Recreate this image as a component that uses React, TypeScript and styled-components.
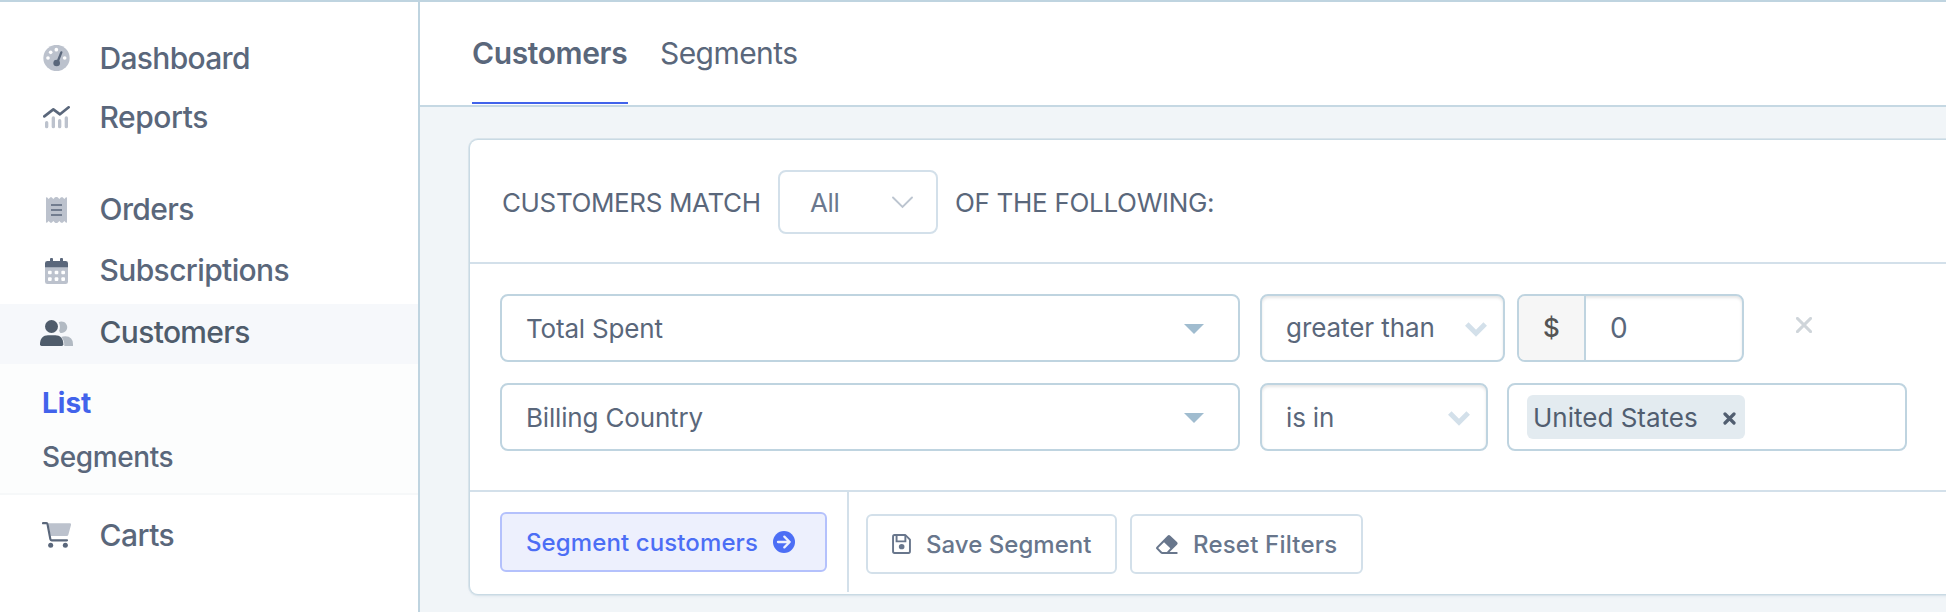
import React from 'react';
import styled, { createGlobalStyle } from 'styled-components';

const ink = '#5a677b';
const muted = '#bcc2cd';
const line = '#d3e0ea';
const fieldLine = '#bfd4e0';

const GlobalStyle = createGlobalStyle`
  * { box-sizing: border-box; }
  body {
    margin: 0;
    overflow: hidden;
    background: #f1f5f8;
    color: ${ink};
    font-family: "Inter", "Liberation Sans", sans-serif;
  }
`;

const Page = styled.div`
  display: flex;
  width: 100%;
  height: 612px;
  overflow: hidden;
  border-top: 2px solid ${fieldLine};
`;

const Label = styled.span<{ $size: number; $track?: number; $weight?: number; $drop?: number }>`
  flex: none;
  margin-top: ${(p) => (p.$drop ?? 0) * 2}px;
  font-size: ${(p) => p.$size}px;
  font-weight: ${(p) => p.$weight ?? 400};
  letter-spacing: ${(p) => p.$track ?? 0}px;
  line-height: 1.2;
  white-space: nowrap;
`;

/* Sidebar */

const Sidebar = styled.nav`
  flex: none;
  display: flex;
  flex-direction: column;
  width: 420px;
  padding-top: 26px;
  background: #fff;
  border-right: 2px solid ${fieldLine};
`;

const NavItem = styled.a<{ $height?: number; $gap?: number; $active?: boolean }>`
  flex: none;
  display: flex;
  align-items: center;
  height: ${(p) => p.$height ?? 60}px;
  margin-top: ${(p) => p.$gap ?? 0}px;
  padding: 0 0 ${(p) => (p.$active ? 3 : 0)}px 39px;
  background: ${(p) => (p.$active ? '#f6f8fb' : 'transparent')};
  color: ${(p) => (p.$active ? '#4f5c6b' : ink)};
`;

const IconSlot = styled.span`
  flex: none;
  display: flex;
  justify-content: center;
  width: 35px;
  margin-right: 25.5px;
`;

const SubMenu = styled.div`
  flex: none;
  display: flex;
  flex-direction: column;
  height: 131px;
  padding: 13px 0 0 42px;
  background: #fcfdfd;
  border-bottom: 2px solid #f6f8f9;
`;

const SubItem = styled.a<{ $active?: boolean }>`
  display: flex;
  align-items: center;
  height: 54px;
  color: ${(p) => (p.$active ? '#4263eb' : ink)};
`;

/* Main column */

const Main = styled.main`
  flex: 1;
  min-width: 0;
  display: flex;
  flex-direction: column;
`;

const TabBar = styled.header`
  flex: none;
  display: flex;
  gap: 32px;
  height: 105px;
  padding: 0 0 1px 52px;
  background: #fff;
  border-bottom: 2px solid #c5d8e3;
`;

const Tab = styled.a<{ $width: number; $active?: boolean }>`
  display: flex;
  align-items: center;
  width: ${(p) => p.$width}px;
  padding-top: 2px;
  border-bottom: 2px solid ${(p) => (p.$active ? '#4263eb' : 'transparent')};
`;

const Card = styled.section`
  flex: none;
  width: 1520px;
  height: 454px;
  margin: 33px 0 0 50px;
  border-radius: 8px;
  background: #fff;
  box-shadow: 0 0 0 1px #c9dae4, 0 0 0 2px #d9e4eb, 0 2px 3px rgba(150, 180, 200, 0.25);
`;

const MatchRow = styled.div`
  display: flex;
  align-items: center;
  height: 124px;
  padding: 2px 0 0 32px;
  border-bottom: 2px solid ${line};
`;

const MatchLabel = styled.div<{ $width?: number }>`
  flex: none;
  display: flex;
  width: ${(p) => (p.$width ? `${p.$width}px` : 'auto')};
  padding-top: 2px;
`;

const MatchSelect = styled.div`
  flex: none;
  display: flex;
  align-items: center;
  justify-content: space-between;
  width: 160px;
  height: 64px;
  margin-right: 17px;
  padding: 0 23px 0 30px;
  border: 2px solid ${line};
  border-radius: 8px;
  color: #6b788e;
`;

const Filters = styled.div`
  display: flex;
  flex-direction: column;
  gap: 21px;
  height: 228px;
  padding: 30px 0 0 30px;
  border-bottom: 2px solid ${line};
`;

const FilterRow = styled.div`
  display: flex;
  align-items: center;
  height: 68px;
`;

const Field = styled.div<{ $width: number; $gap?: number; $inset?: boolean; $right?: number }>`
  flex: none;
  display: flex;
  align-items: center;
  justify-content: space-between;
  width: ${(p) => p.$width}px;
  height: 68px;
  margin-right: ${(p) => p.$gap ?? 0}px;
  padding: 2px ${(p) => p.$right ?? 16}px 0 24px;
  border: 2px solid ${fieldLine};
  border-radius: 8px;
  box-shadow: ${(p) => (p.$inset ? 'inset 0 2px 3px rgba(0, 0, 0, 0.1)' : 'none')};
`;

const MoneyField = styled(Field)`
  justify-content: flex-start;
  padding: 0;
  overflow: hidden;
`;

const Currency = styled.div`
  display: flex;
  align-items: center;
  justify-content: center;
  width: 67px;
  height: 100%;
  background: #f6f6f6;
  border-right: 2px solid ${fieldLine};
  color: #545454;
`;

const Amount = styled.div`
  display: flex;
  padding: 2px 0 0 24px;
`;

const TagField = styled(Field)`
  padding: 0 18px;
`;

const Tag = styled.div`
  display: flex;
  align-items: center;
  justify-content: space-between;
  width: 218px;
  height: 44px;
  padding: 2px 9px 0 6px;
  border-radius: 6px;
  background: #e3ebf0;
  color: #515e70;
`;

const RemoveButton = styled.span`
  display: flex;
  margin: 0 0 6px 52px;
`;

const Footer = styled.div`
  display: flex;
  height: 102px;
`;

const PrimaryArea = styled.div`
  flex: none;
  width: 379px;
  height: 100px;
  padding: 20px 0 0 30px;
  border-right: 2px solid ${line};
`;

const SecondaryArea = styled.div`
  display: flex;
  gap: 13px;
  padding: 22px 0 0 17px;
`;

const Button = styled.a<{ $width: number; $primary?: boolean }>`
  flex: none;
  display: flex;
  align-items: center;
  gap: 15px;
  width: ${(p) => p.$width}px;
  height: 60px;
  padding-left: 24px;
  border: 2px solid ${(p) => (p.$primary ? '#b4c1fc' : line)};
  border-radius: 6px;
  background: ${(p) => (p.$primary ? '#edf0fd' : '#fff')};
  color: ${(p) => (p.$primary ? '#4c6ef5' : '#68768c')};
`;

/* Icons */

const GaugeIcon = () => (
  <svg width="27" height="26" viewBox="0 0 81 78">
    <circle cx="40.5" cy="39" r="39.5" fill={muted} />
    <g fill="#fff">
      <circle cx="15" cy="39" r="5.5" />
      <circle cx="23" cy="22" r="5.5" />
      <circle cx="40" cy="14" r="5.5" />
      <circle cx="65" cy="39" r="5.5" />
    </g>
    <path d="M55 22 44 50" stroke={ink} strokeWidth="7" strokeLinecap="round" />
    <circle cx="41" cy="54" r="10" fill={ink} />
  </svg>
);

const ReportsIcon = () => (
  <svg width="27" height="23" viewBox="0 0 81 69" fill="none" strokeLinecap="round" strokeLinejoin="round">
    <path d="M11 50V62M31 36V62M50 44V62M70 36V62" stroke={muted} strokeWidth="10" />
    <path d="M4 31 31 10 51 25 77 4" stroke={ink} strokeWidth="8" />
  </svg>
);

const ReceiptIcon = () => (
  <svg width="21" height="26" viewBox="0 0 63 78">
    <path
      d="M0 2Q0 0 3 1L8 6 13 1Q15 0 17 1L22 6 27 1Q31-1 35 1L40 6 45 1Q48 0 50 1L55 6 60 1Q63 0 63 3V75Q63 78 60 77L55 72 50 77Q48 78 45 77L40 72 35 77Q31 79 27 77L22 72 17 77Q15 78 13 77L8 72 3 77Q0 78 0 75Z"
      fill={muted}
    />
    <path d="M15 24H48M15 39H48M15 54H48" stroke={ink} strokeWidth="5" />
  </svg>
);

const CalendarIcon = () => (
  <svg width="23" height="26" viewBox="0 0 69 78">
    <path d="M0 27H69V71Q69 78 62 78H7Q0 78 0 71Z" fill={muted} />
    <path
      d="M7 9H15V3Q15 0 18 0H21Q24 0 24 3V9H45V3Q45 0 48 0H51Q54 0 54 3V9H62Q69 9 69 16V28H0V16Q0 9 7 9Z"
      fill={ink}
    />
    <g fill="#fff">
      {[38, 58].map((y) =>
        [9, 29, 49].map((x) => <rect key={`${x}-${y}`} x={x} y={y} width="11" height="11" rx="3" />),
      )}
    </g>
  </svg>
);

const UsersIcon = () => (
  <svg width="33" height="26" viewBox="0 0 99 78">
    <path d="M56 7A17 17 0 1 1 60 38Q59 34 57 33Q63 20 56 7Z" fill="#b2bac3" />
    <path d="M64 51Q68 49 76 49Q99 50 99 73V78H73Q74 62 64 51Z" fill="#b2bac3" />
    <circle cx="34.5" cy="19.5" r="19.5" fill="#4f5c6b" />
    <path d="M0 73C0 55 10 46 24 46H46C60 46 70 55 70 73Q70 78 65 78H5Q0 78 0 73Z" fill="#4f5c6b" />
  </svg>
);

const CartIcon = () => (
  <svg width="29" height="26" viewBox="0 0 87 78">
    <path d="M19 4H84Q88 4 87 9L79 38Q78 42 74 42H26Z" fill={muted} />
    <path
      d="M3 3.5H13Q16 3.5 16.5 6L25 51.5Q25.5 55 29 55H75"
      fill="none"
      stroke={ink}
      strokeWidth="6.5"
      strokeLinecap="round"
    />
    <circle cx="26" cy="70" r="7.5" fill={ink} />
    <circle cx="70" cy="70" r="7.5" fill={ink} />
  </svg>
);

const ThinChevron = () => (
  <svg width="21" height="13" viewBox="0 0 21 13" fill="none">
    <path d="M1 1.5 10.5 11 20 1.5" stroke="#bcc5d0" strokeWidth="1.9" strokeLinecap="round" />
  </svg>
);

const BoldChevron = () => (
  <svg width="22" height="15" viewBox="0 0 22 15" fill="none">
    <path d="M1.8 2 11 11.2 20.2 2" stroke={line} strokeWidth="5" />
  </svg>
);

const Caret = () => (
  <svg width="20" height="10" viewBox="0 0 20 10">
    <path d="M0 0H20L10 10Z" fill="#a0bccf" />
  </svg>
);

const CloseIcon = () => (
  <svg width="16" height="16" viewBox="0 0 16 16">
    <path d="M1.4 1.4 14.6 14.6M14.6 1.4 1.4 14.6" stroke="#cfd5da" strokeWidth="2.9" strokeLinecap="round" />
  </svg>
);

const TagCloseIcon = () => (
  <svg width="13" height="13" viewBox="0 0 13 13">
    <path d="M2 2 11 11M11 2 2 11" stroke="#515e70" strokeWidth="3.2" strokeLinecap="round" />
  </svg>
);

const ArrowCircleIcon = () => (
  <svg width="22" height="22" viewBox="0 0 66 66" fill="none">
    <circle cx="33" cy="33" r="33" fill="#4c6ef5" />
    <path d="M15 33H50M34 17 50 33 34 49" stroke="#edf0fd" strokeWidth="7" strokeLinecap="round" strokeLinejoin="round" />
  </svg>
);

const SaveIcon = () => (
  <svg width="19" height="20" viewBox="0 0 54 60" preserveAspectRatio="none" fill="none" stroke="currentColor" strokeWidth="5.5">
    <path d="M7 3H38L51 17V52Q51 57 47 57H7Q3 57 3 52V8Q3 3 7 3Z" strokeLinejoin="round" />
    <path d="M13 4V22H38V4" />
    <circle cx="27.5" cy="38" r="8" fill="currentColor" stroke="none" />
  </svg>
);

const EraserIcon = () => (
  <svg width="22" height="19" viewBox="0 0 63 57" preserveAspectRatio="none">
    <path
      fill="currentColor"
      fillRule="evenodd"
      d="M33 2Q37-2 41 2L60 21Q64 25 60 29L39 51H60Q62 51 62 54T60 57H18Q15 57 13 55L2 43Q-2 39 2 35ZM23 22 7 38Q6 39 7 40L17 50Q18 51 20 51H29Q31 51 32 50L41 40Z"
    />
  </svg>
);

export default function App() {
  return (
    <>
      <GlobalStyle />
      <Page>
        <Sidebar>
          <NavItem>
            <IconSlot><GaugeIcon /></IconSlot>
            <Label $size={30} $weight={500} $track={-0.68}>Dashboard</Label>
          </NavItem>
          <NavItem $height={59}>
            <IconSlot><ReportsIcon /></IconSlot>
            <Label $size={30} $weight={500} $track={-0.45} $drop={-1}>Reports</Label>
          </NavItem>
          <NavItem $height={61} $gap={32}>
            <IconSlot><ReceiptIcon /></IconSlot>
            <Label $size={30} $weight={500} $track={-0.6} $drop={-1}>Orders</Label>
          </NavItem>
          <NavItem $height={61}>
            <IconSlot><CalendarIcon /></IconSlot>
            <Label $size={30} $weight={500} $track={-0.62} $drop={-1}>Subscriptions</Label>
          </NavItem>
          <NavItem $gap={3} $active>
            <IconSlot><UsersIcon /></IconSlot>
            <Label $size={30} $weight={500} $track={-0.68} $drop={-1}>Customers</Label>
          </NavItem>
          <SubMenu>
            <SubItem $active><Label $size={28} $weight={700}>List</Label></SubItem>
            <SubItem><Label $size={28} $weight={500} $track={-0.4}>Segments</Label></SubItem>
          </SubMenu>
          <NavItem $gap={10}>
            <IconSlot><CartIcon /></IconSlot>
            <Label $size={30} $weight={500} $track={-0.5}>Carts</Label>
          </NavItem>
        </Sidebar>
        <Main>
          <TabBar>
            <Tab $width={156} $active><Label $size={30} $weight={600} $track={-0.38}>Customers</Label></Tab>
            <Tab $width={140}><Label $size={30} $track={-0.57}>Segments</Label></Tab>
          </TabBar>
          <Card>
            <MatchRow>
              <MatchLabel $width={276}><Label $size={26} $track={-0.38}>CUSTOMERS MATCH</Label></MatchLabel>
              <MatchSelect>
                <Label $size={26} $track={-0.37} $drop={1}>All</Label>
                <ThinChevron />
              </MatchSelect>
              <MatchLabel><Label $size={26} $track={-0.31}>OF THE FOLLOWING:</Label></MatchLabel>
            </MatchRow>
            <Filters>
              <FilterRow>
                <Field $width={740} $gap={20} $right={34}>
                  <Label $size={26} $track={-0.18}>Total Spent</Label>
                  <Caret />
                </Field>
                <Field $width={245} $gap={12} $inset>
                  <Label $size={26} $track={-0.07} $drop={-1}>greater than</Label>
                  <BoldChevron />
                </Field>
                <MoneyField $width={227} $inset>
                  <Currency><Label $size={26} $weight={500}>$</Label></Currency>
                  <Amount><Label $size={28}>0</Label></Amount>
                </MoneyField>
                <RemoveButton><CloseIcon /></RemoveButton>
              </FilterRow>
              <FilterRow>
                <Field $width={740} $gap={20} $right={34}>
                  <Label $size={26} $track={-0.17}>Billing Country</Label>
                  <Caret />
                </Field>
                <Field $width={228} $gap={19} $inset>
                  <Label $size={26} $track={-0.16}>is in</Label>
                  <BoldChevron />
                </Field>
                <TagField $width={400}>
                  <Tag>
                    <Label $size={26}>United States</Label>
                    <TagCloseIcon />
                  </Tag>
                </TagField>
              </FilterRow>
            </Filters>
            <Footer>
              <PrimaryArea>
                <Button $width={327} $primary>
                  <Label $size={24} $weight={500} $track={0.11} $drop={1}>Segment customers</Label>
                  <ArrowCircleIcon />
                </Button>
              </PrimaryArea>
              <SecondaryArea>
                <Button $width={251}>
                  <SaveIcon />
                  <Label $size={24} $weight={500} $track={0.03} $drop={1}>Save Segment</Label>
                </Button>
                <Button $width={233}>
                  <EraserIcon />
                  <Label $size={24} $weight={500} $track={0.2} $drop={1}>Reset Filters</Label>
                </Button>
              </SecondaryArea>
            </Footer>
          </Card>
        </Main>
      </Page>
    </>
  );
}
